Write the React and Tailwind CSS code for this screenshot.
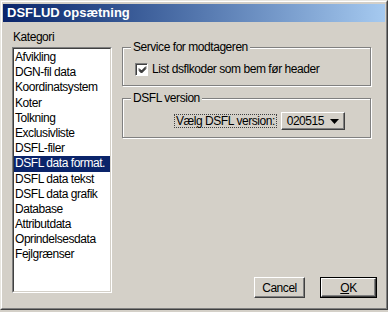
import React from 'react';

const font = { fontFamily: '"Liberation Sans", Arial, sans-serif' };

const categories = [
  'Afvikling',
  'DGN-fil data',
  'Koordinatsystem',
  'Koter',
  'Tolkning',
  'Exclusivliste',
  'DSFL-filer',
  'DSFL data format.',
  'DSFL data tekst',
  'DSFL data grafik',
  'Database',
  'Attributdata',
  'Oprindelsesdata',
  'Fejlgrænser',
];

const GroupBox = ({ title, className, children }) => (
  <div className={`relative border border-[#808080] shadow-[1px_1px_0_#fff,inset_1px_1px_0_#fff] ${className}`}>
    <span className="absolute -top-[8px] left-[8px] bg-[#d4d0c8] px-[2px] leading-[14px]">{title}</span>
    {children}
  </div>
);

const Button = ({ children, isDefault, className }) => (
  <div
    className={`flex items-center justify-center bg-[#d4d0c8] ${
      isDefault ? 'border border-black' : ''
    } ${className}`}
  >
    <div className="flex h-full w-full items-center justify-center border-t border-l border-t-white border-l-white border-r border-b border-r-[#404040] border-b-[#404040] shadow-[inset_-1px_-1px_0_#808080]">
      {children}
    </div>
  </div>
);

export default function App() {
  return (
    <div
      className="w-[388px] h-[312px] bg-[#d4d0c8] text-[12px] tracking-[-0.45px] text-black overflow-hidden"
      style={font}
    >
      <div className="h-[310px] w-[388px] border-t border-l border-t-[#e8e6e0] border-l-[#e8e6e0] border-b border-b-[#404040] border-r border-r-[#404040]">
        <div className="h-full w-full border-t border-l border-t-white border-l-white border-b border-b-[#808080] border-r border-r-[#808080] px-[1px] pt-[2px]">
          {/* Title bar */}
          <div className="h-[18px] bg-gradient-to-r from-[#0a246a] to-[#a6caf0] flex items-center pl-[4px]">
            <span className="text-white font-bold text-[13px] tracking-[0px]">DSFLUD opsætning</span>
          </div>

          <div className="flex pl-[9px] pt-[7px]">
            {/* Category list */}
            <div className="flex flex-col">
              <div className="h-[16px] leading-[16px] pl-[1px]">Kategori</div>
              <div className="mt-[2px] w-[100px] h-[246px] bg-white border-t border-l border-t-[#808080] border-l-[#808080] border-b border-r border-b-white border-r-white">
                <div className="h-full w-full border-t border-l border-t-[#404040] border-l-[#404040] border-b border-r border-b-[#d4d0c8] border-r-[#d4d0c8] pt-[1px]">
                  {categories.map((c) => (
                    <div
                      key={c}
                      className={`h-[15.2px] leading-[15px] pl-[1px] whitespace-nowrap ${
                        c === 'DSFL data format.' ? 'bg-[#0a246a] text-white' : ''
                      }`}
                    >
                      {c}
                    </div>
                  ))}
                </div>
              </div>
            </div>

            {/* Right side */}
            <div className="flex flex-col ml-[10px] w-[249px]">
              <GroupBox title="Service for modtageren" className="mt-[18px] h-[39px]">
                <div className="flex items-center pl-[12px] pt-[14px]">
                  <div className="w-[13px] h-[13px] bg-white border-t border-l border-t-[#808080] border-l-[#808080] border-b border-r border-b-white border-r-white">
                    <div className="w-full h-full border-t border-l border-t-[#404040] border-l-[#404040] flex items-center justify-center">
                      <svg width="9" height="9" viewBox="0 0 9 9">
                        <path d="M1 3.5 L3.5 6 L8 1.5 M1 4.5 L3.5 7 L8 2.5 M1 5.5 L3.5 8 L8 3.5" stroke="#000" strokeWidth="1" fill="none" />
                      </svg>
                    </div>
                  </div>
                  <span className="ml-[4px] leading-[14px]">List dsflkoder som bem før header</span>
                </div>
              </GroupBox>

              <GroupBox title="DSFL version" className="mt-[12px] h-[40px]">
                <div className="flex items-center pl-[51px] pt-[13px]">
                  <span className="border border-dotted border-[#404040] px-[1px] h-[14px] leading-[12px]">Vælg DSFL version:</span>
                  <Button className="ml-[4px] w-[64px] h-[18px]">
                    <span className="mr-[6px]">020515</span>
                    <svg width="9" height="5" viewBox="0 0 9 5">
                      <path d="M0 0 H9 L4.5 5 Z" fill="#000" />
                    </svg>
                  </Button>
                </div>
              </GroupBox>

              <div className="flex justify-end mt-[139px] mr-[-6px] gap-[15px]">
                <Button className="w-[51px] h-[21px]">Cancel</Button>
                <Button isDefault className="w-[57px] h-[21px]">
                  <span><span className="underline">O</span>K</span>
                </Button>
              </div>
            </div>
          </div>
        </div>
      </div>
    </div>
  );
}
